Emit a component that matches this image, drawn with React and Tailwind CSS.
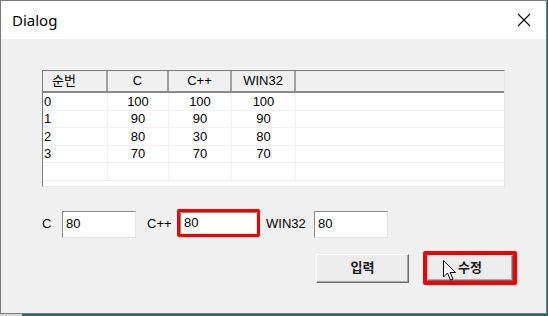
import React from 'react';

const rows = [
    ['0', '100', '100', '100'],
    ['1', '90', '90', '90'],
    ['2', '80', '30', '80'],
    ['3', '70', '70', '70'],
    ['', '', '', ''],
];

const font = { fontFamily: '"Liberation Sans", "Noto Sans CJK KR", sans-serif' };

function Field({ value, w = 'w-[74px]', h = 'h-[27px]' }) {
    return (
        <div className={`${w} ${h} bg-white border border-t-[#8a8a8a] border-l-[#8a8a8a] border-r-[#e3e3e3] border-b-[#e3e3e3] flex items-center pl-[3px] text-[13px] text-black shrink-0`}>
            {value}
        </div>
    );
}

function Button({ children }) {
    return (
        <div className="w-full h-full bg-[#ececec] border border-t-white border-l-white border-r-[#6b6b6b] border-b-[#6b6b6b] shadow-[inset_-1px_-1px_0_#a8a8a8] flex items-center justify-center text-[13px] font-semibold text-[#1a1a1a]">
            {children}
        </div>
    );
}

export default function App() {
    return (
        <div className="w-[548px] h-[316px] bg-[#1e6f6a] relative overflow-hidden" style={font}>
            <div className="w-[547px] h-[314px] bg-[#f0f0f0] border border-[#7a7a7a] flex flex-col">
                {/* title bar */}
                <div className="h-[38px] bg-white flex items-center justify-between pl-[11px] pr-[15px]">
                    <span className="text-[15px] text-black" style={{ fontFamily: '"Noto Sans", "Open Sans", sans-serif' }}>Dialog</span>
                    <svg width="14" height="14" viewBox="0 0 14 14">
                        <path d="M1 1 L13 13 M13 1 L1 13" stroke="#111" strokeWidth="1.2" />
                    </svg>
                </div>

                {/* list view */}
                <div className="mt-[31px] ml-[41px] w-[463px] h-[117px] bg-white border border-t-[#7a7a7a] border-l-[#7a7a7a] border-r-[#e6e6e6] border-b-[#e6e6e6] overflow-hidden">
                    <div className="grid grid-cols-[65px_61px_63px_64px_1fr] h-[22px] bg-[#f0f0f0] border-b-2 border-[#8a8a8a] text-[13px] text-black">
                        <div className="flex items-center pl-[9px] border-r-2 border-[#a0a0a0]">순번</div>
                        <div className="flex items-center justify-center border-r-2 border-[#a0a0a0]">C</div>
                        <div className="flex items-center justify-center border-r-2 border-[#a0a0a0]">C++</div>
                        <div className="flex items-center justify-center border-r-2 border-[#a0a0a0]">WIN32</div>
                        <div></div>
                    </div>
                    {rows.map((r, i) => (
                        <div key={i} className="grid grid-cols-[65px_61px_63px_64px_1fr] h-[17.5px] border-b border-[#f0f0f0] text-[13px] text-black leading-none">
                            <div className="flex items-center pl-[1px] border-r border-[#f0f0f0]">{r[0]}</div>
                            <div className="flex items-center justify-center border-r border-[#f0f0f0]">{r[1]}</div>
                            <div className="flex items-center justify-center border-r border-[#f0f0f0]">{r[2]}</div>
                            <div className="flex items-center justify-center border-r border-[#f0f0f0]">{r[3]}</div>
                            <div></div>
                        </div>
                    ))}
                </div>

                {/* inputs */}
                <div className="mt-[22px] flex items-center h-[30px] text-[13px] text-black">
                    <span className="ml-[41px] w-[20px]">C</span>
                    <Field value="80" />
                    <span className="ml-[11px] w-[30px]">C++</span>
                    <div className="w-[83px] h-[28px] border-[3px] border-[#f00000] rounded-[2px] flex items-center justify-center -mt-[3px]">
                        <Field value="80" w="w-[77px]" h="h-[22px]" />
                    </div>
                    <span className="ml-[6px] w-[48px]">WIN32</span>
                    <Field value="80" />
                </div>

                {/* buttons */}
                <div className="mt-[12px] flex items-center">
                    <div className="ml-[315px] w-[93px] h-[29px]">
                        <Button>입력</Button>
                    </div>
                    <div className="ml-[14px] w-[94px] h-[34px] border-[4px] border-[#f00000] rounded-[2px] relative">
                        <Button>수정</Button>
                        <svg className="absolute left-[16px] top-[5px]" width="14" height="22" viewBox="0 0 14 22">
                            <path d="M0.5 0.5 L0.5 17 L4.5 13 L7.5 20 L10 19 L7 12.5 L12.5 12.5 Z" fill="white" stroke="black" strokeWidth="1" />
                        </svg>
                    </div>
                </div>
            </div>
            <div className="absolute left-0 top-[314px] w-[22px] h-[2px] bg-[#d8d8d8]"></div>
        </div>
    );
}
